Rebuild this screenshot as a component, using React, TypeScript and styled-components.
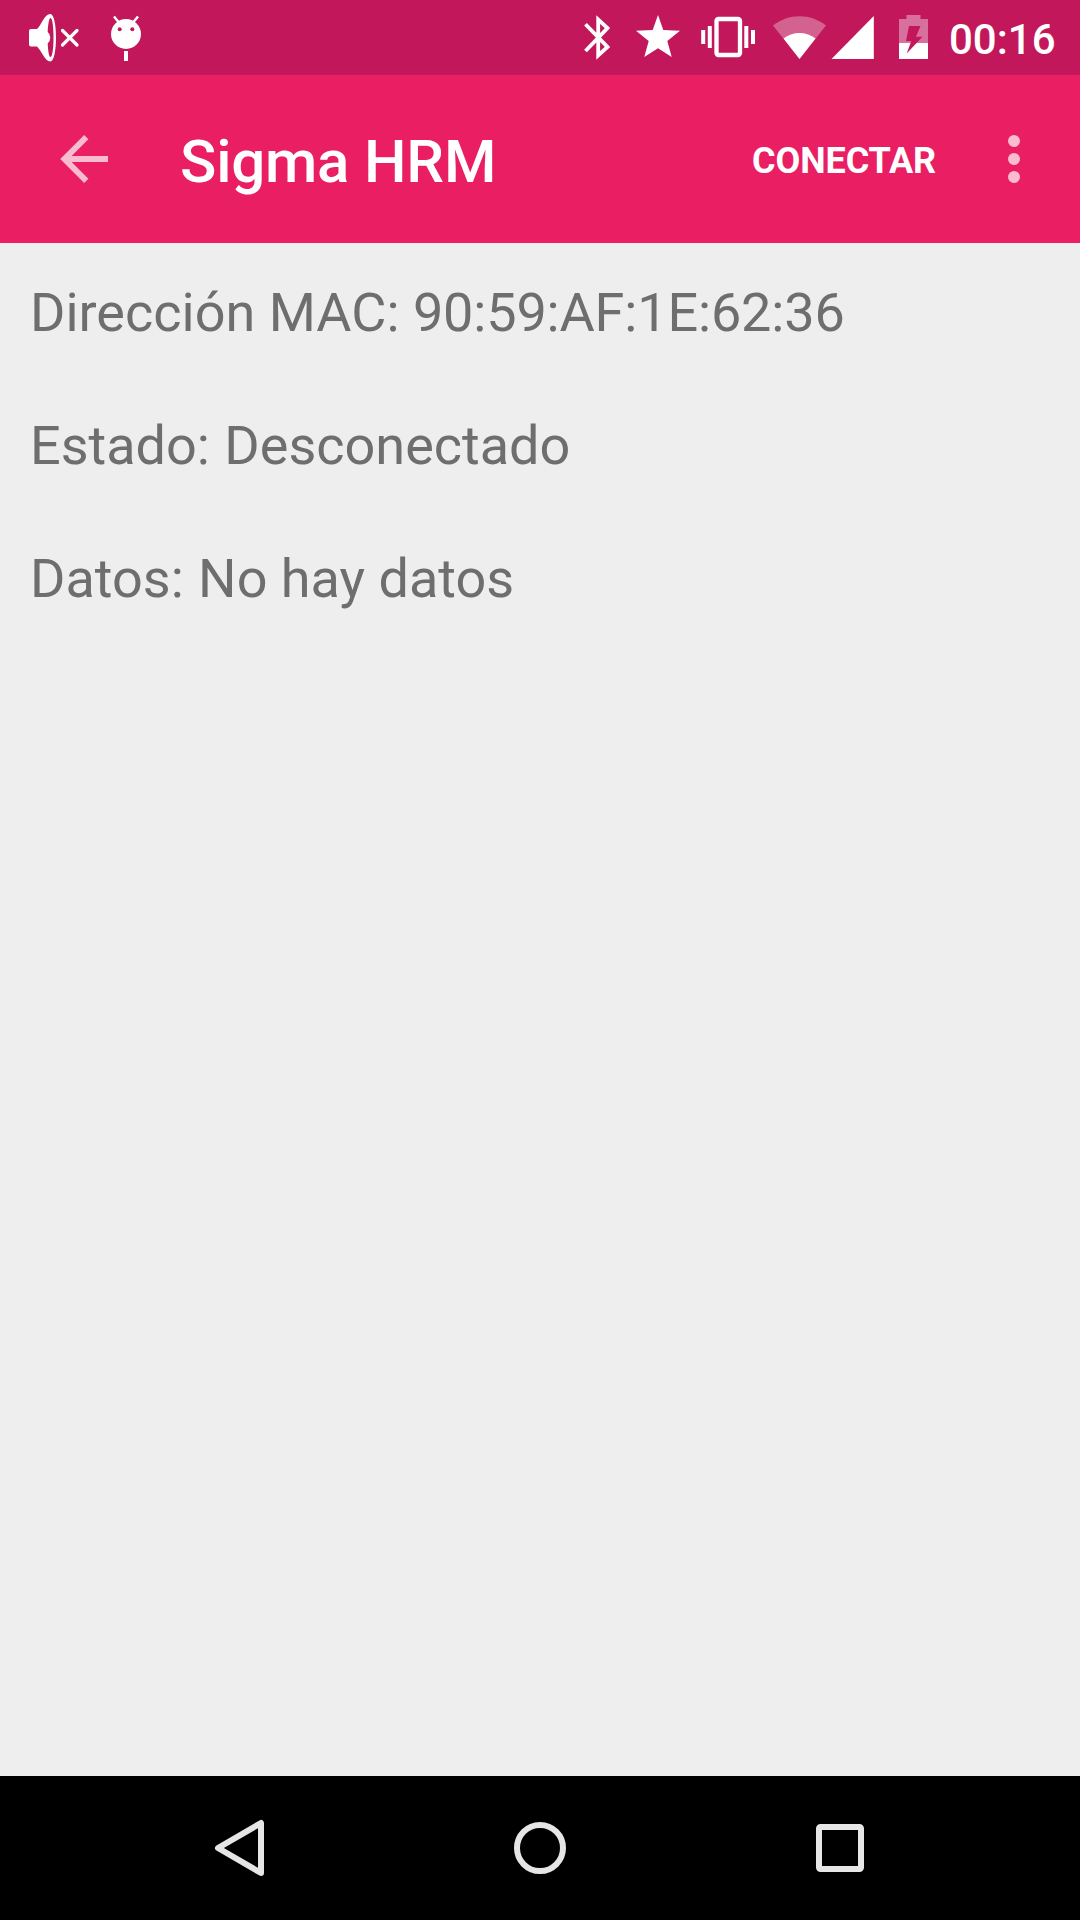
import React from 'react';
import styled, { createGlobalStyle } from 'styled-components';

const GlobalStyle = createGlobalStyle`
  * { box-sizing: border-box; }
  body { margin: 0; background: #eeeeee; font-family: Roboto, sans-serif; }
`;

const Screen = styled.div`
  width: 1080px;
  height: 1920px;
  display: flex;
  flex-direction: column;
  overflow: hidden;
  background: #eeeeee;
`;

const StatusBar = styled.header`
  height: 75px;
  flex: none;
  display: flex;
  align-items: flex-start;
  justify-content: space-between;
  padding: 0 24px 0 28px;
  background: #c2185b;
`;

const IconGroup = styled.div`
  display: flex;
  height: 75px;
`;

const Icon = styled.svg<{ $w: number; $gap?: number }>`
  display: block;
  flex: none;
  width: ${(p) => p.$w}px;
  height: 75px;
  margin-left: ${(p) => p.$gap ?? 0}px;
  fill: #fff;
`;

const Clock = styled.time`
  width: 107px;
  margin-left: 20px;
  padding-top: 3px;
  color: #fff;
  font-size: 42px;
  font-weight: 500;
  line-height: 73px;
  white-space: nowrap;
`;

const Toolbar = styled.div`
  height: 168px;
  flex: none;
  display: flex;
  align-items: center;
  padding-right: 30px;
  background: #e91e63;
`;

const ToolButton = styled.button`
  display: flex;
  align-items: center;
  justify-content: center;
  height: 168px;
  padding: 0;
  border: 0;
  background: none;
  color: #f8bbd0;
`;

const BackButton = styled(ToolButton)`
  width: 174px;
`;

const MoreButton = styled(ToolButton)`
  width: 72px;
  margin-left: 42px;
`;

const Title = styled.h1`
  flex: 1;
  margin: 0;
  padding: 6px 0 0 6px;
  color: #fff;
  font-size: 60px;
  font-weight: 500;
  letter-spacing: -0.2px;
  line-height: 72px;
  white-space: nowrap;
`;

const ActionButton = styled.button`
  padding: 3px 0 0;
  border: 0;
  background: none;
  color: #fff;
  font: 700 36px/42px Roboto, sans-serif;
  letter-spacing: -0.1px;
`;

const Content = styled.main`
  flex: 1;
  padding: 3px 30px;
`;

const Field = styled.p`
  margin: 0;
  height: 133px;
  color: #6e6e6e;
  font-size: 54px;
  line-height: 133px;
  white-space: nowrap;
`;

const FieldValue = styled.span<{ $code?: boolean }>`
  margin-left: ${(p) => (p.$code ? 0 : 1)}px;
  letter-spacing: ${(p) => (p.$code ? '-0.15px' : 'normal')};
`;

const NavBar = styled.nav`
  height: 144px;
  flex: none;
  display: flex;
  justify-content: center;
  align-items: center;
  background: #000;
`;

const NavButton = styled.button`
  width: 300px;
  height: 144px;
  padding: 0;
  border: 0;
  background: none;
  display: flex;
  align-items: center;
  justify-content: center;
`;

const NavIcon = styled.svg`
  width: 72px;
  height: 72px;
  fill: none;
  stroke: #e6e6e6;
  stroke-width: 6;
  stroke-linejoin: round;
`;

const fields = [
  { label: 'Dirección MAC', value: '90:59:AF:1E:62:36', code: true },
  { label: 'Estado', value: 'Desconectado' },
  { label: 'Datos', value: 'No hay datos' },
];

const MutedIcon = () => (
  <Icon $w={52} viewBox="28 0 52 75">
    <path
      fillRule="evenodd"
      d="M31 29H37C41 26 44 14 50.3 14C54 14 56 25 56 37.5S54 61.5 50.3 61.5C45 61.5 41 50 37 46.5H31Q29 46.5 29 44.500V31Q29 29 31 29ZM50.500 18C49 18 48 25 47.700 32Q50.300 34 50.300 37.500T47.700 43.500C48 51 49 57 50.500 57C52.500 57 53.500 47 53.500 37.500S52.500 18 50.500 18Z"
    />
    <path d="M62.500 30.500L77 45M77 30.500L62.500 45" fill="none" stroke="#fff" strokeWidth="3.200" strokeLinecap="round" />
  </Icon>
);

const DebugIcon = () => (
  <Icon $w={32} $gap={30} viewBox="110 0 32 75">
    <path d="M114 16.500L118.500 22M138 16.500L133.500 22" stroke="#fff" strokeWidth="2.500" />
    <circle cx="126" cy="34" r="15" />
    <circle cx="119.700" cy="29.300" r="2" fill="#c2185b" />
    <circle cx="132.300" cy="29.300" r="2" fill="#c2185b" />
    <path d="M124 51h4v10h-4z" />
  </Icon>
);

const BluetoothIcon = () => (
  <Icon $w={28} viewBox="583 0 28 75">
    <path
      d="M585.500 24.300L607.500 47L598.200 55.500V19.500L607.500 28L585.500 51"
      fill="none"
      stroke="#fff"
      strokeWidth="3.800"
      strokeMiterlimit="10"
    />
  </Icon>
);

const StarIcon = () => (
  <Icon $w={46} $gap={24} viewBox="635 0 46 75">
    <path d="M658 15L663.300 30L680 30.800L667.300 41L671.700 57L658 48.300L644.300 57L648.700 41L636 30.800L652.700 30Z" />
  </Icon>
);

const VibrateIcon = () => (
  <Icon $w={56} $gap={19} viewBox="700 0 56 75">
    <rect x="716.500" y="19" width="23.500" height="36" rx="2" fill="none" stroke="#fff" strokeWidth="4.300" />
    <path d="M701.200 30h4v14h-4zM707.800 26h4v22h-4zM744.300 26h4v22h-4zM751 30h4v14h-4z" />
  </Icon>
);

const WifiIcon = () => (
  <Icon $w={54} $gap={17} viewBox="773 0 54 75">
    <path d="M799.500 59L773 25.500C781 19.500 790 16.300 799.500 16.300S818 19.500 826 25.500Z" fill="#d4628f" />
    <path d="M799.500 59L783.500 38.500C788 35 793.500 33 799.500 33S811 35 815.500 38.500Z" />
  </Icon>
);

const SignalIcon = () => (
  <Icon $w={43} $gap={4} viewBox="831 0 43 75">
    <path d="M831.500 59L873.800 16V59Z" />
  </Icon>
);

const BatteryIcon = () => (
  <Icon $w={30} $gap={25} viewBox="899 0 30 75">
    <path d="M906.500 15H920.500V19H928V43H899V19H906.500Z" fill="#d8709d" />
    <path d="M899 43h29v16h-29z" />
    <path d="M909 26H920.500L916 36.700H922.500L906.700 53.500L911.300 41H906Z" fill="#c2185b" />
  </Icon>
);

export default function App() {
  return (
    <Screen>
      <GlobalStyle />
      <StatusBar>
        <IconGroup>
          <MutedIcon />
          <DebugIcon />
        </IconGroup>
        <IconGroup>
          <BluetoothIcon />
          <StarIcon />
          <VibrateIcon />
          <WifiIcon />
          <SignalIcon />
          <BatteryIcon />
          <Clock>00:16</Clock>
        </IconGroup>
      </StatusBar>
      <Toolbar>
        <BackButton aria-label="Atrás">
          <svg width="72" height="72" viewBox="-36 -36 72 72" fill="none" stroke="currentColor" strokeWidth="6">
            <path d="M21 0H-20M-0.700 -21.800L-22.500 0L-0.700 21.800" />
          </svg>
        </BackButton>
        <Title>Sigma HRM</Title>
        <ActionButton>CONECTAR</ActionButton>
        <MoreButton aria-label="Más opciones">
          <svg width="12" height="48" viewBox="0 0 12 48" fill="currentColor">
            <circle cx="6" cy="6" r="6" />
            <circle cx="6" cy="24" r="6" />
            <circle cx="6" cy="42" r="6" />
          </svg>
        </MoreButton>
      </Toolbar>
      <Content>
        {fields.map(({ label, value, code }) => (
          <Field key={label}>
            {label}: <FieldValue $code={code}>{value}</FieldValue>
          </Field>
        ))}
      </Content>
      <NavBar>
        <NavButton aria-label="Volver">
          <NavIcon viewBox="204 1812 72 72">
            <path d="M218 1848L261 1823V1873Z" />
          </NavIcon>
        </NavButton>
        <NavButton aria-label="Inicio">
          <NavIcon viewBox="0 0 72 72">
            <circle cx="36" cy="36" r="23" />
          </NavIcon>
        </NavButton>
        <NavButton aria-label="Recientes">
          <NavIcon viewBox="0 0 72 72">
            <rect x="15" y="15" width="42" height="42" rx="1.500" />
          </NavIcon>
        </NavButton>
      </NavBar>
    </Screen>
  );
}
